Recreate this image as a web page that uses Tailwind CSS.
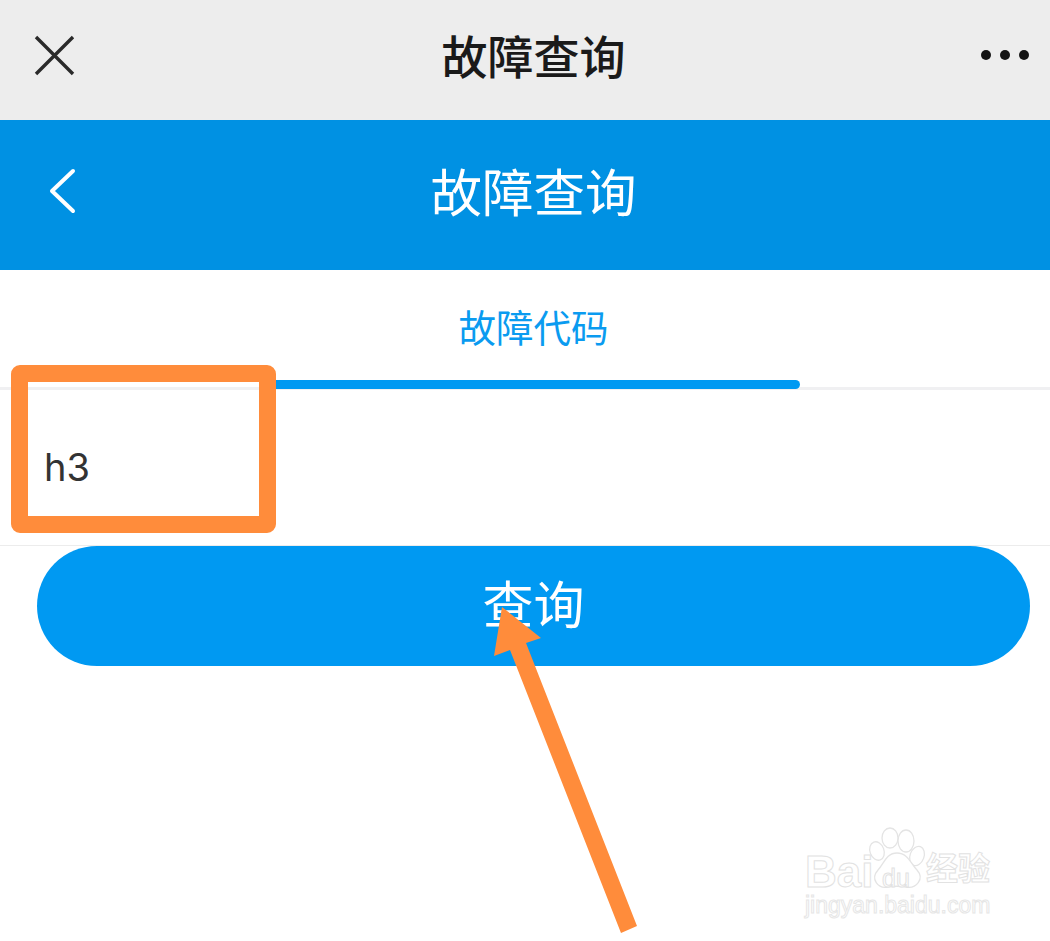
<!DOCTYPE html>
<html lang="zh-CN">
<head>
    <meta charset="UTF-8">
    <meta name="viewport" content="width=device-width, initial-scale=1.0">
    <title>故障查询</title>
    <script src="https://cdn.jsdelivr.net/npm/@tailwindcss/browser@4"></script>
</head>
<body class="bg-white font-['Roboto','Noto_Sans_CJK_SC',sans-serif]">
    <div class="relative w-[1050px] h-[941px] overflow-hidden">
        <!-- wechat bar -->
        <div class="relative flex items-center justify-center h-[120px] pl-[17px] bg-[#ededed]">
            <svg class="absolute left-[34px] top-[35px] w-[41px] h-[41px]" viewBox="0 0 41 41"><path d="M2 2 L39 39 M39 2 L2 39" stroke="#2a2a2a" stroke-width="3.4" fill="none"/></svg>
            <h1 class="text-[46px] font-medium text-[#1a1a1a] leading-none mt-[-4px]">故障查询</h1>
            <div class="absolute right-[21px] top-[50px] flex gap-[9px]">
                <span class="w-[10px] h-[10px] rounded-full bg-[#151515]"></span>
                <span class="w-[10px] h-[10px] rounded-full bg-[#151515]"></span>
                <span class="w-[10px] h-[10px] rounded-full bg-[#151515]"></span>
            </div>
        </div>
        <!-- page header -->
        <div class="relative flex items-center justify-center h-[150px] pl-[17px] bg-[#0091e3]">
            <svg class="absolute left-[48px] top-[48px] w-[28px] h-[46px]" viewBox="0 0 28 46"><path d="M25 3 L4 23 L25 43" stroke="#fff" stroke-width="4" stroke-linecap="round" stroke-linejoin="round" fill="none"/></svg>
            <h2 class="text-[51.5px] text-white leading-none mt-[-1px]">故障查询</h2>
        </div>
        <!-- tab -->
        <div class="relative flex justify-center h-[120px] pl-[17px] border-b-[3px] border-[#f0f0f2]">
            <span class="text-[37.5px] text-[#0a9bf0] leading-none mt-[41px]">故障代码</span>
            <div class="absolute left-[268px] top-[110px] w-[532px] h-[9px] rounded-full bg-[#0099f2]"></div>
        </div>
        <!-- input row -->
        <div class="flex items-center h-[156px] pl-[44px] border-b border-[#ececec]">
            <span class="text-[38px] font-['Inter',sans-serif] font-normal text-[#333] leading-none mt-[-2px]">h3</span>
        </div>
        <!-- button -->
        <div class="pl-[37px]">
            <button class="flex items-center justify-center w-[993px] h-[120px] rounded-full bg-[#0099f2] text-[51px] text-white leading-none">查询</button>
        </div>

        <!-- orange annotations -->
        <div class="absolute left-[11px] top-[365px] w-[265px] h-[168px] border-[17px] border-[#ff8c3b] rounded-[9px]"></div>
        <svg class="absolute inset-0 w-[1050px] h-[941px]" viewBox="0 0 1050 941">
            <polygon fill="#ff8c3b" points="502,607 541,638 526,643 637,926 621,933 510,650 494,656"/>
        </svg>

        <!-- watermark -->
        <div class="absolute left-[780px] top-[810px] w-[270px] h-[131px] text-white">
            <svg class="absolute left-0 top-0 w-[270px] h-[131px]" viewBox="0 0 270 131" fill="#fff" stroke="#e4e4e4" stroke-width="1.3">
                <ellipse cx="97" cy="41" rx="7" ry="9.5" transform="rotate(-20 97 41)"/>
                <ellipse cx="110" cy="28" rx="8" ry="10"/>
                <ellipse cx="126" cy="31" rx="8" ry="11"/>
                <ellipse cx="137" cy="46" rx="7" ry="10" transform="rotate(20 137 46)"/>
                <path d="M117 43 C128 43 131 54 137 60 C145 69 136 79 126 77 C120 76 114 76 108 77 C98 79 90 69 98 60 C104 54 106 43 117 43 Z"/>
            </svg>
            <div class="absolute left-[25px] top-[40px] text-[44px] font-bold leading-none font-['Liberation_Sans',sans-serif] [-webkit-text-stroke:1px_#e2e2e2]">Bai</div>
            <div class="absolute left-[102px] top-[56px] text-[25px] leading-none font-['Liberation_Sans',sans-serif] [-webkit-text-stroke:1px_#e2e2e2]">du</div>
            <div class="absolute left-[146px] top-[43px] text-[32px] font-bold leading-none [-webkit-text-stroke:1px_#e2e2e2]">经验</div>
            <div class="absolute left-[25px] top-[84px] text-[23px] leading-none whitespace-nowrap font-['Liberation_Sans',sans-serif] [-webkit-text-stroke:1px_#e6e6e6]">jingyan.baidu.com</div>
        </div>
    </div>
</body>
</html>
